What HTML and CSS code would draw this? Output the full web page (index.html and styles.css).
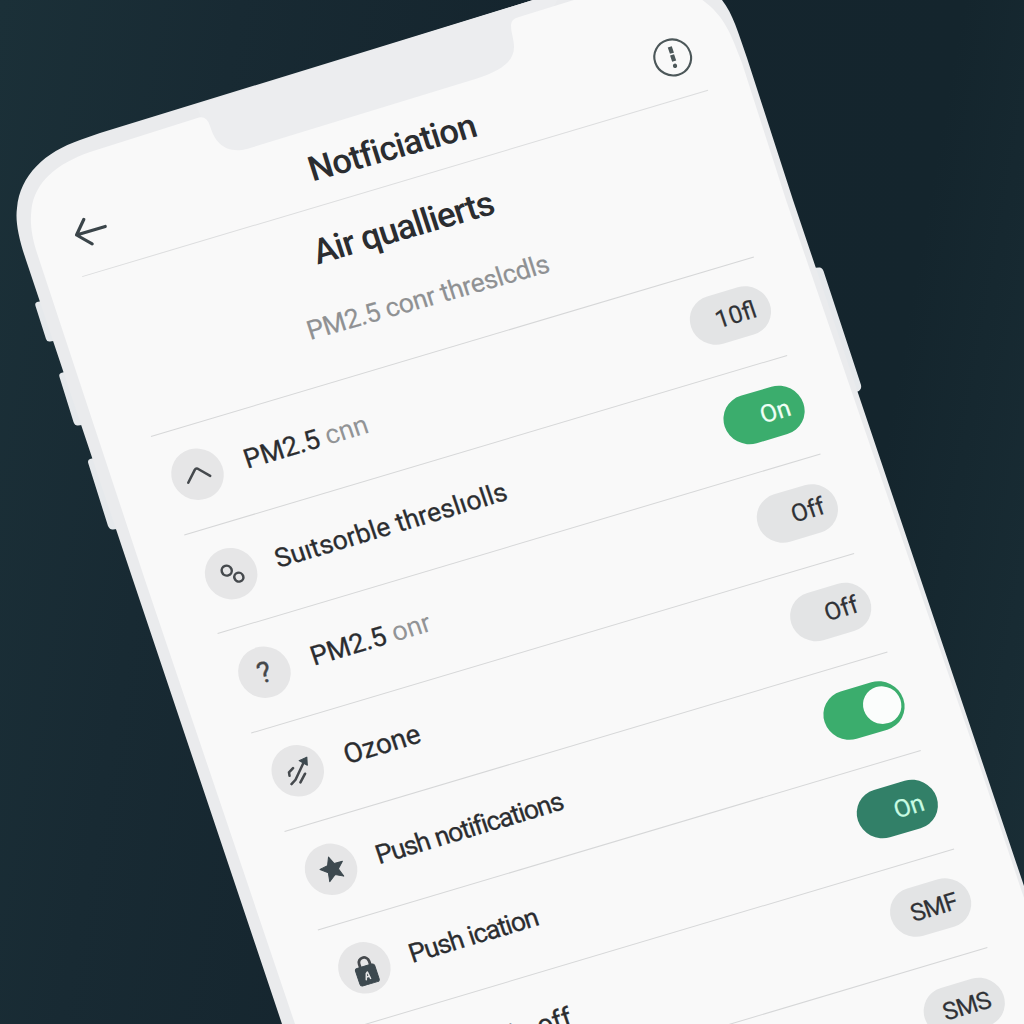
FILE: index.html
```html
<!DOCTYPE html>
<html lang="en">
<head>
<meta charset="utf-8">
<title>Notficiation</title>
<link rel="stylesheet" href="styles.css">
</head>
<body>
<svg class="phone" viewBox="0 0 1024 1024" aria-hidden="true">
  <g class="phone-buttons">
    <path d="M42 301 L37 302 Q34.500 303 35.500 306 L46 339 Q47 342 50 341.500 L60 340z"/>
    <path d="M68 371 L61 373 Q58.500 374 59.500 377 L73.500 422 Q75 426 78 425.500 L90 424z"/>
    <path d="M98 457 L90 459 Q87 460 88.500 464 L108 526 Q110 530 113 529.500 L124 528z"/>
    <path d="M812 268 L819 267.500 Q822 267 823.500 271 L861 385 Q862 389 858 391.500 L850 392z"/>
  </g>
  <path class="phone-body" d="M282 1024 L133 580 L28 266 C19 240 15 222 17 208 C20 175 45 152 80 140 L100 133 L533 0 L600 -20 L700 -20 L722 0 C733 14 738 32 747 58 L793 200 L1024 886 V1024z"/>
  <path class="phone-notch" d="M196 105 L533 0 L560 -5 L530 50 L470 90 L250 156 L215 150z"/>
  <path class="phone-screen" d="M295 1024 L145 580 L37 253 C31 234 30 222 31.500 209 C35 182 56 164 90 152 L199 117.500 Q207 116 210 126 C215 143 226 154 247 149 L477 78.500 C500 71 514 62 514 47 C514 39 511 33 511 25 Q511 19 519 17 L590 -5 L695 -5 C724 13 730 32 742 63 L786 200 L971 740 L1024 898 V1024z"/>
</svg>

<main class="screen">
  <header class="topbar">
    <svg class="back" viewBox="0 0 34 30"><path d="M32 15H2M14 2 2 15 14 28"/></svg>
    <h1 class="topbar-title">Notficiation</h1>
    <svg class="alert" viewBox="-20 -20 40 40"><circle r="18.200"/><path d="M.6-11V-4.200M.2-2.600V4"/><path class="alert-dot" d="M-.5 8.600V8.800"/></svg>
  </header>

  <section class="intro">
    <h2 class="intro-title">Air quallierts</h2>
    <p class="intro-text">PM2.5 conr threslcdls</p>
  </section>

  <ul class="list">
    <li class="row">
      <span class="badge"><svg viewBox="-26 -26 52 52"><path d="M-11.500 5.500-1-5.200Q.5-6.500 2-5.200L11.500 5.200"/></svg></span>
      <span class="label label-wide">PM2.5 <span class="muted">cnn</span></span>
      <span class="pill pill-number">10fl</span>
    </li>
    <li class="row">
      <span class="badge"><svg viewBox="-26 -26 52 52"><circle cx="-3.200" cy="-4.200" r="5"/><circle cx="6.200" cy="5.500" r="4.500"/></svg></span>
      <span class="label label-long">Suıtsorble threslıolls</span>
      <span class="pill pill-on">On</span>
    </li>
    <li class="row">
      <span class="badge">?</span>
      <span class="label label-wide">PM2.5 <span class="muted">onr</span></span>
      <span class="pill">Off</span>
    </li>
    <li class="row">
      <span class="badge"><svg viewBox="-26 -26 52 52"><path d="M-10.200 11-5 8 8-6M-3.600-3.900-8.800-1-9.400 2.500M6 4.900-1.200 12"/><path class="solid" d="M13-10.500 4.500-9.300 10.800-2.500z"/></svg></span>
      <span class="label label-large">Ozone</span>
      <span class="pill">Off</span>
    </li>
    <li class="row">
      <span class="badge"><svg viewBox="-26 -26 52 52"><path class="solid" d="M1.500-12.500 4.800-4.600 13.300-4.500 7.100 1.600 9.800 10.200 2.200 6.200-5.200 11.500-3.700 2.600-10.500-3-2.200-4.400z"/></svg></span>
      <span class="label label-tight">Push notifications</span>
      <span class="pill pill-on toggle"><span class="knob"></span></span>
    </li>
    <li class="row">
      <span class="badge"><svg viewBox="-26 -26 52 52"><path class="shackle" d="M-3.800 0V-5A5.200 5.200 0 0 1 6.600-5V0"/><rect class="solid" x="-9.500" y="-1.500" width="20" height="18.500" rx="2.500"/><path class="keyhole" d="M-2 12 0 6 1.500 5 2.500 12M-1 9.500H2"/></svg></span>
      <span class="label label-tight">Push ication</span>
      <span class="pill pill-dark">On</span>
    </li>
    <li class="row">
      <span class="badge"></span>
      <span class="label label-last">Push in off</span>
      <span class="pill pill-sms">SMF</span>
    </li>
    <li class="row">
      <span class="badge"></span>
      <span class="label"></span>
      <span class="pill pill-sms">SMS</span>
    </li>
  </ul>
</main>
</body>
</html>
```
FILE: styles.css
```css
* { box-sizing: border-box; }

body {
  position: relative;
  width: 1024px;
  height: 1024px;
  margin: 0;
  overflow: hidden;
  background: linear-gradient(100deg, #1b3038 0%, #182a33 20%, #15252e 45%, #14252d 80%, #1a2e36 100%);
  color: #2b2d30;
  font-family: Roboto, "Liberation Sans", sans-serif;
}

.phone { position: absolute; inset: 0; width: 1024px; height: 1024px; }
.phone-buttons { fill: #e6e9ec; }
.phone-body { fill: #eaebed; }
.phone-notch { fill: #ecedef; }
.phone-screen { fill: #f9f9f9; }

/* The screen content lies on the tilted plane of the phone */
.screen {
  position: absolute;
  left: 0;
  top: 0;
  width: 653px;
  transform-origin: 0 0;
  transform: matrix(0.9585, -0.2855, 0.3203, 0.9473, 55.4, 197.5);
}

.topbar {
  display: flex;
  align-items: center;
  justify-content: space-between;
  height: 84px;
  padding: 0 3px 0 6px;
  border-bottom: 1.5px solid #dcddde;
}
.topbar svg { fill: none; stroke: #3b454a; stroke-linecap: round; stroke-linejoin: round; }
.topbar .back { width: 34px; height: 30px; stroke-width: 3.1; }
.topbar .alert { width: 40px; height: 40px; stroke: #4c5759; stroke-width: 2.1; }
.alert path { stroke-width: 4.2; stroke-linecap: butt; }
.alert .alert-dot { stroke-linecap: round; }
.topbar-title {
  margin: 12px 0 0 20px;
  font-size: 34.5px;
  line-height: 40px;
  font-weight: 500;
  letter-spacing: -0.75px;
  transform: rotate(1.2deg);
}

.intro {
  display: flex;
  flex-direction: column;
  align-items: center;
  gap: 36px;
  height: 172px;
  padding: 24px 14px 0 0;
}
.intro-title { margin: 0; font-size: 35px; line-height: 42px; font-weight: 500; letter-spacing: -1px; transform: rotate(0.6deg); }
.intro-text {
  margin: 0 0 0 3px;
  font-size: 26.5px;
  line-height: 32px;
  letter-spacing: -0.35px;
  color: #8f9193;
  -webkit-text-stroke: 0.2px;
  transform: rotate(0.7deg);
}

.list { margin: 0 0 0 14px; width: 629px; padding: 0; list-style: none; }
.row {
  display: flex;
  align-items: center;
  height: 104.2px;
  padding: 0 0 4.5px 6px;
  border-top: 1.5px solid #d6d7d8;
}
.badge {
  display: flex;
  align-items: center;
  justify-content: center;
  width: 52px;
  height: 52px;
  border-radius: 50%;
  background: #e6e6e7;
  color: #44474a;
  font-size: 29px;
  -webkit-text-stroke: 0.3px;
}
.badge svg { width: 52px; height: 52px; fill: none; stroke: #45494d; stroke-width: 2.5; stroke-linecap: round; stroke-linejoin: round; }
.badge .solid { fill: #3d494f; stroke: #3d494f; stroke-width: 1; }
.badge .shackle { stroke-width: 2.8; }
.badge .keyhole { stroke: #e6e6e7; stroke-width: 1.5; }

.label {
  flex: 1;
  margin: -1px 0 0 22px;
  font-size: 26.5px;
  line-height: 32px;
  white-space: nowrap;
  -webkit-text-stroke: 0.3px;
}
.label-wide { margin-left: 23px; font-size: 27px; letter-spacing: -0.05px; }
.label-long { margin-left: 20.5px; letter-spacing: 0.05px; }
.label-large { font-size: 27.8px; margin-left: 23px; }
.label-last { margin: 4px 0 0 22px; font-size: 27.5px; }
.label-tight { margin-left: 21px; letter-spacing: -1.15px; word-spacing: 1px; }
.muted { color: #929496; -webkit-text-stroke: 0; }

.pill {
  display: flex;
  align-items: center;
  justify-content: flex-end;
  width: 82.5px;
  height: 50px;
  padding-right: 13px;
  border-radius: 25px;
  background: #e3e4e5;
  color: #303236;
  font-size: 24.5px;
  -webkit-text-stroke: 0.2px;
}
.pill-on { background: #3bad6d; color: #effff5; }
.pill-dark { background: #328068; color: #c8fbe2; }
.pill-on, .pill-dark { padding-right: 14px; }
.pill-number { padding-right: 15px; }
.pill-sms { padding-right: 14px; letter-spacing: -0.6px; }
.toggle { padding-right: 3px; }
.knob { width: 38px; height: 38px; border-radius: 50%; background: #fbfdfc; }
```
